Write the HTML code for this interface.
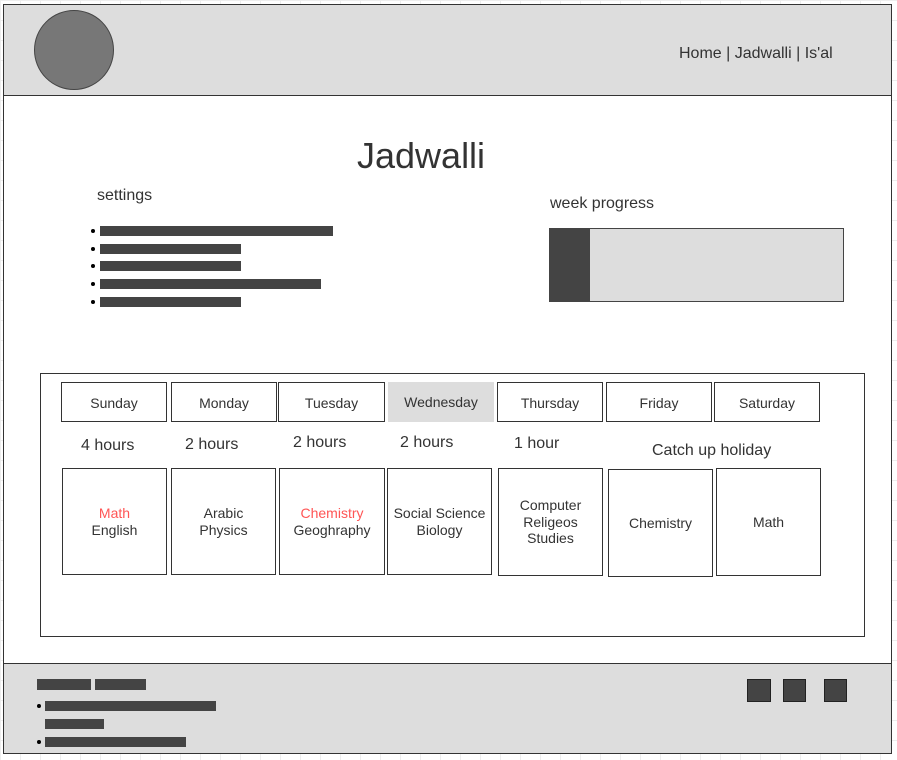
<!DOCTYPE html>
<html><head><meta charset="utf-8"><style>
*{margin:0;padding:0;box-sizing:border-box}
body{width:897px;height:760px;position:relative;background:#fff;font-family:"Liberation Sans",sans-serif;color:#333;overflow:hidden;
background-image:linear-gradient(#eee 1px,transparent 1px),linear-gradient(90deg,#eee 1px,transparent 1px);background-size:20px 20px}
div{position:absolute}
.b{border:1px solid #333;background:#fff;display:flex;align-items:center;justify-content:center;text-align:center;font-size:14px;line-height:17px}
.bar{background:#444;height:10px}
.dot{width:4px;height:4px;border-radius:50%;background:#000}
.t{white-space:nowrap}
.r{color:#f55}
</style></head><body>
<div style="left:3px;top:4px;width:889px;height:750px;border:1px solid #333;background:#fff"></div>
<div style="left:3px;top:4px;width:889px;height:92px;border:1px solid #333;background:#ddd"></div>
<div style="left:34px;top:10px;width:80px;height:80px;border-radius:50%;background:#777;border:1px solid #444"></div>
<div class="t" style="left:679px;top:45px;font-size:16px">Home | Jadwalli | Is'al</div>
<div class="t" style="left:357px;top:135px;font-size:36px">Jadwalli</div>
<div class="t" style="left:97px;top:187px;font-size:16px">settings</div>
<div class="bar" style="left:100px;top:226px;width:233px"></div>
<div class="bar" style="left:100px;top:244px;width:141px"></div>
<div class="bar" style="left:100px;top:261px;width:141px"></div>
<div class="bar" style="left:100px;top:279px;width:221px"></div>
<div class="bar" style="left:100px;top:297px;width:141px"></div>
<div class="dot" style="left:91px;top:229px"></div>
<div class="dot" style="left:91px;top:247px"></div>
<div class="dot" style="left:91px;top:264px"></div>
<div class="dot" style="left:91px;top:282px"></div>
<div class="dot" style="left:91px;top:300px"></div>
<div class="t" style="left:550px;top:195px;font-size:16px">week progress</div>
<div style="left:549px;top:228px;width:295px;height:74px;border:1px solid #444;background:#ddd"></div>
<div style="left:549px;top:228px;width:41px;height:74px;background:#444"></div>

<div style="left:40px;top:373px;width:825px;height:264px;border:1px solid #333;background:#fff"></div>
<div class="b" style="left:61px;top:382px;width:106px;height:40px;padding-top:2px">Sunday</div>
<div class="b" style="left:171px;top:382px;width:106px;height:40px;padding-top:2px">Monday</div>
<div class="b" style="left:278px;top:382px;width:107px;height:40px;padding-top:2px">Tuesday</div>
<div class="b" style="left:388px;top:382px;width:106px;height:40px;background:#ddd;border-color:#ddd">Wednesday</div>
<div class="b" style="left:497px;top:382px;width:106px;height:40px;padding-top:2px">Thursday</div>
<div class="b" style="left:606px;top:382px;width:106px;height:40px;padding-top:2px">Friday</div>
<div class="b" style="left:714px;top:382px;width:106px;height:40px;padding-top:2px">Saturday</div>
<div class="t" style="left:81px;top:437px;font-size:16px">4 hours</div>
<div class="t" style="left:185px;top:436px;font-size:16px">2 hours</div>
<div class="t" style="left:293px;top:434px;font-size:16px">2 hours</div>
<div class="t" style="left:400px;top:434px;font-size:16px">2 hours</div>
<div class="t" style="left:514px;top:435px;font-size:16px">1 hour</div>
<div class="t" style="left:652px;top:442px;font-size:16px">Catch up holiday</div>
<div class="b" style="left:62px;top:468px;width:105px;height:107px"><span><span class="r">Math</span><br>English</span></div>
<div class="b" style="left:171px;top:468px;width:105px;height:107px">Arabic<br>Physics</div>
<div class="b" style="left:279px;top:468px;width:106px;height:107px"><span><span class="r">Chemistry</span><br>Geoghraphy</span></div>
<div class="b" style="left:387px;top:468px;width:105px;height:107px">Social Science<br>Biology</div>
<div class="b" style="left:498px;top:468px;width:105px;height:108px;line-height:16.5px">Computer<br>Religeos<br>Studies</div>
<div class="b" style="left:608px;top:469px;width:105px;height:108px">Chemistry</div>
<div class="b" style="left:716px;top:468px;width:105px;height:108px">Math</div>

<div style="left:3px;top:663px;width:889px;height:91px;border:1px solid #333;background:#ddd"></div>
<div style="left:37px;top:679px;width:54px;height:11px;background:#444"></div>
<div style="left:95px;top:679px;width:51px;height:11px;background:#444"></div>
<div style="left:45px;top:701px;width:171px;height:10px;background:#444"></div>
<div style="left:45px;top:719px;width:59px;height:10px;background:#444"></div>
<div style="left:45px;top:737px;width:141px;height:10px;background:#444"></div>
<div class="dot" style="left:37px;top:704px"></div>
<div class="dot" style="left:37px;top:740px"></div>
<div style="left:747px;top:679px;width:24px;height:23px;background:#444;border:1px solid #222"></div>
<div style="left:783px;top:679px;width:23px;height:23px;background:#444;border:1px solid #222"></div>
<div style="left:824px;top:679px;width:23px;height:23px;background:#444;border:1px solid #222"></div>
</body></html>
